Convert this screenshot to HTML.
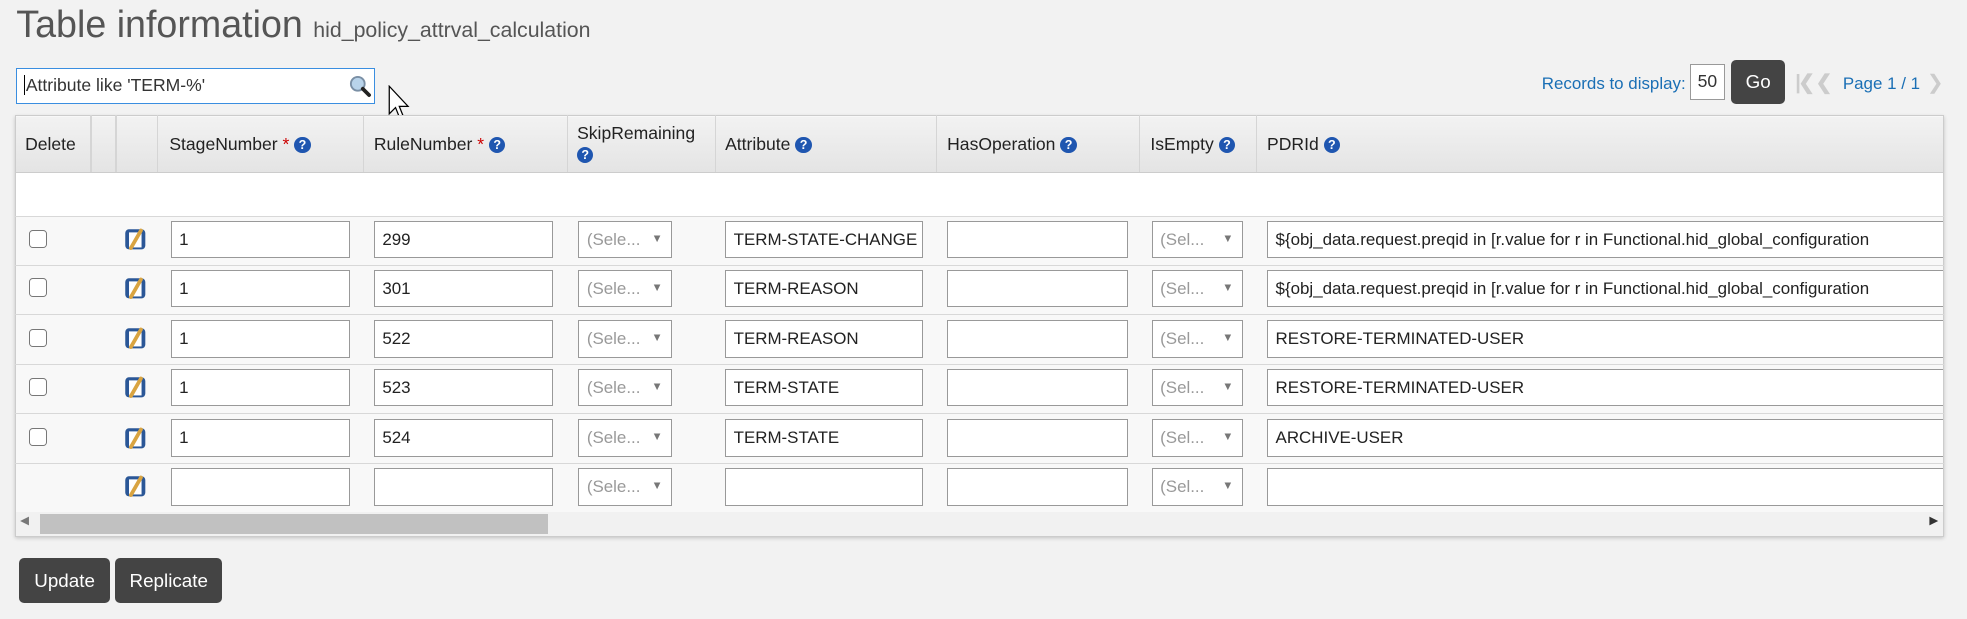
<!DOCTYPE html>
<html><head><meta charset="utf-8"><style>
html,body{margin:0;padding:0;background:#f2f2f2;overflow:hidden}
body{width:1967px;height:619px}
#w{zoom:1.2545;position:relative;width:1568px;height:494px;font-family:"Liberation Sans",sans-serif;color:#333}
.a{position:absolute}
.t{font-size:14.5px;white-space:nowrap}
.inp{position:absolute;background:#fff;border:1px solid #999;box-sizing:border-box;height:30px;font-size:13.5px;line-height:28px;padding-left:6px;white-space:nowrap;overflow:hidden;color:#222}
.sel{color:#999}
.sel:after{content:"▼";position:absolute;right:7px;top:0;font-size:9px;color:#777}
.cb{position:absolute;left:23px;width:13px;height:13px;border:1px solid #777;border-radius:3px;background:#fff}
.ed{position:absolute;left:99px;width:18px;height:18px}
.q{display:inline-block;width:13px;height:13px;border-radius:50%;background:#1f56b0;color:#fff;font-size:10px;font-weight:bold;text-align:center;line-height:13px;vertical-align:1px;margin-left:4px}
.st{color:#c00}
.hd{position:absolute;top:92px;font-size:14px;color:#222;white-space:nowrap}
.vl{position:absolute;top:92px;height:45px;width:1px;background:#d5d5d5}
.hl{position:absolute;left:12px;width:1538px;height:1px;background:#d8d8d8}
.btn{position:absolute;background:#444;color:#fff;border-radius:4px;font-size:15px;text-align:center}
</style></head><body><div id="w">
<div class="a" style="left:13px;top:2px;font-size:30px;color:#555;white-space:nowrap">Table information <span style="font-size:17px;color:#555">hid_policy_attrval_calculation</span></div>
<div class="a" style="left:13px;top:54px;width:286px;height:29px;box-sizing:border-box;border:1px solid #3a8ee0;background:#fff;font-size:14px;line-height:27px;padding-left:5px;color:#333"><span style="border-left:1px solid #000;padding-left:1px">Attribute like 'TERM-%'</span>
<svg class="a" style="right:2px;top:5px" width="18" height="18" viewBox="0 0 18 18"><circle cx="7" cy="7" r="5.5" fill="#b8d3ea" stroke="#7a8fa5" stroke-width="1.5"/><path d="M11 11 L16 16" stroke="#222" stroke-width="3" stroke-linecap="round"/></svg></div>
<svg class="a" style="left:309px;top:68px" width="22" height="32" viewBox="0 0 22 32"><path d="M1 1 L1 23 L6 18 L10 28 L13 27 L9 17 L16 17 Z" fill="#fff" stroke="#000" stroke-width="1"/></svg>
<div class="a t" style="left:1229px;top:59px;color:#1a6fb5;font-size:13.5px">Records to display:</div>
<div class="a" style="left:1347px;top:51px;width:28px;height:29px;box-sizing:border-box;border:1px solid #999;background:#fff;font-size:14px;line-height:27px;text-align:center">50</div>
<div class="btn" style="left:1380px;top:48px;width:43px;height:35px;line-height:35px">Go</div>
<div class="a" style="left:1431px;top:56px;font-size:16px;color:#ccc;font-weight:bold;letter-spacing:-2px">|❮ ❮</div>
<div class="a t" style="left:1469px;top:59px;color:#1a6fb5;font-size:13.5px">Page 1 / 1</div>
<div class="a" style="left:1536px;top:56px;font-size:16px;color:#ccc">❯</div>
<div class="a" style="left:12px;top:92px;width:1538px;height:336px;background:#f8f8f8;border:1px solid #ccc;box-sizing:border-box;box-shadow:0 1px 3px rgba(0,0,0,.2)"></div>
<div class="a" style="left:13px;top:93px;width:1536px;height:44px;background:linear-gradient(#f2f2f2,#e4e4e4);border-bottom:1px solid #ccc"></div>
<div class="a" style="left:13px;top:138px;width:1536px;height:34px;background:#fff"></div>
<div class="vl" style="left:72px"></div><div class="vl" style="left:92px"></div><div class="vl" style="left:125px"></div><div class="vl" style="left:289px"></div><div class="vl" style="left:452px"></div><div class="vl" style="left:570px"></div><div class="vl" style="left:746px"></div><div class="vl" style="left:908px"></div><div class="vl" style="left:1001px"></div>
<div class="hd" style="left:20px;top:107px">Delete</div>
<div class="hd" style="left:135px;top:107px">StageNumber <span class="st">*</span><span class="q">?</span></div>
<div class="hd" style="left:298px;top:107px">RuleNumber <span class="st">*</span><span class="q">?</span></div>
<div class="hd" style="left:460px;top:98px">SkipRemaining<br><span class="q" style="margin-left:0">?</span></div>
<div class="hd" style="left:578px;top:107px">Attribute<span class="q">?</span></div>
<div class="hd" style="left:755px;top:107px">HasOperation<span class="q">?</span></div>
<div class="hd" style="left:917px;top:107px">IsEmpty<span class="q">?</span></div>
<div class="hd" style="left:1010px;top:107px">PDRId<span class="q">?</span></div>
<div class="hl" style="top:172px"></div><div class="hl" style="top:211px"></div><div class="hl" style="top:250px"></div><div class="hl" style="top:290px"></div><div class="hl" style="top:329px"></div><div class="hl" style="top:369px"></div>
<div id="rows"></div>
<div class="a" style="left:13px;top:408px;width:1536px;height:19px;background:#f1f1f1"></div>
<div class="a" style="left:32px;top:410px;width:405px;height:16px;background:#c1c1c1"></div>
<div class="a" style="left:16px;top:410px;font-size:9px;color:#777">◀</div>
<div class="a" style="left:1538px;top:410px;font-size:9px;color:#333">▶</div>
<div class="btn" style="left:15px;top:445px;width:73px;height:36px;line-height:36px">Update</div>
<div class="btn" style="left:92px;top:445px;width:85px;height:36px;line-height:36px">Replicate</div>
<script>
var d=[["1","299","TERM-STATE-CHANGE","${obj_data.request.preqid in [r.value for r in Functional.hid_global_configuration"],["1","301","TERM-REASON","${obj_data.request.preqid in [r.value for r in Functional.hid_global_configuration"],["1","522","TERM-REASON","RESTORE-TERMINATED-USER"],["1","523","TERM-STATE","RESTORE-TERMINATED-USER"],["1","524","TERM-STATE","ARCHIVE-USER"],null];
var ys=[176,215,255,294,334,373],h="";
var ic='<svg viewBox="0 0 18 18" width="18" height="18"><rect x="1" y="1" width="16" height="16" rx="3" fill="#2b5797"/><rect x="4" y="3.5" width="10" height="12" fill="#fff"/><path d="M5.5 16 L13.5 2" stroke="#d9a441" stroke-width="3" stroke-linecap="round"/></svg>';
ys.forEach(function(y,i){var r=d[i]||["","","",""];
if(d[i])h+='<div class="cb" style="top:'+(y+7)+'px"></div>';
h+='<div class="ed" style="top:'+(y+6)+'px">'+ic+'</div>';
h+='<div class="inp" style="left:136px;top:'+y+'px;width:143px">'+r[0]+'</div>';
h+='<div class="inp" style="left:298px;top:'+y+'px;width:143px">'+r[1]+'</div>';
h+='<div class="inp sel" style="left:461px;top:'+y+'px;width:75px">(Sele...</div>';
h+='<div class="inp" style="left:578px;top:'+y+'px;width:158px">'+r[2]+'</div>';
h+='<div class="inp" style="left:755px;top:'+y+'px;width:144px"></div>';
h+='<div class="inp sel" style="left:918px;top:'+y+'px;width:73px">(Sel...</div>';
h+='<div class="inp" style="left:1010px;top:'+y+'px;width:539px;border-right:none">'+r[3]+'</div>';});
document.getElementById("rows").innerHTML=h;
</script>
</div></body></html>
